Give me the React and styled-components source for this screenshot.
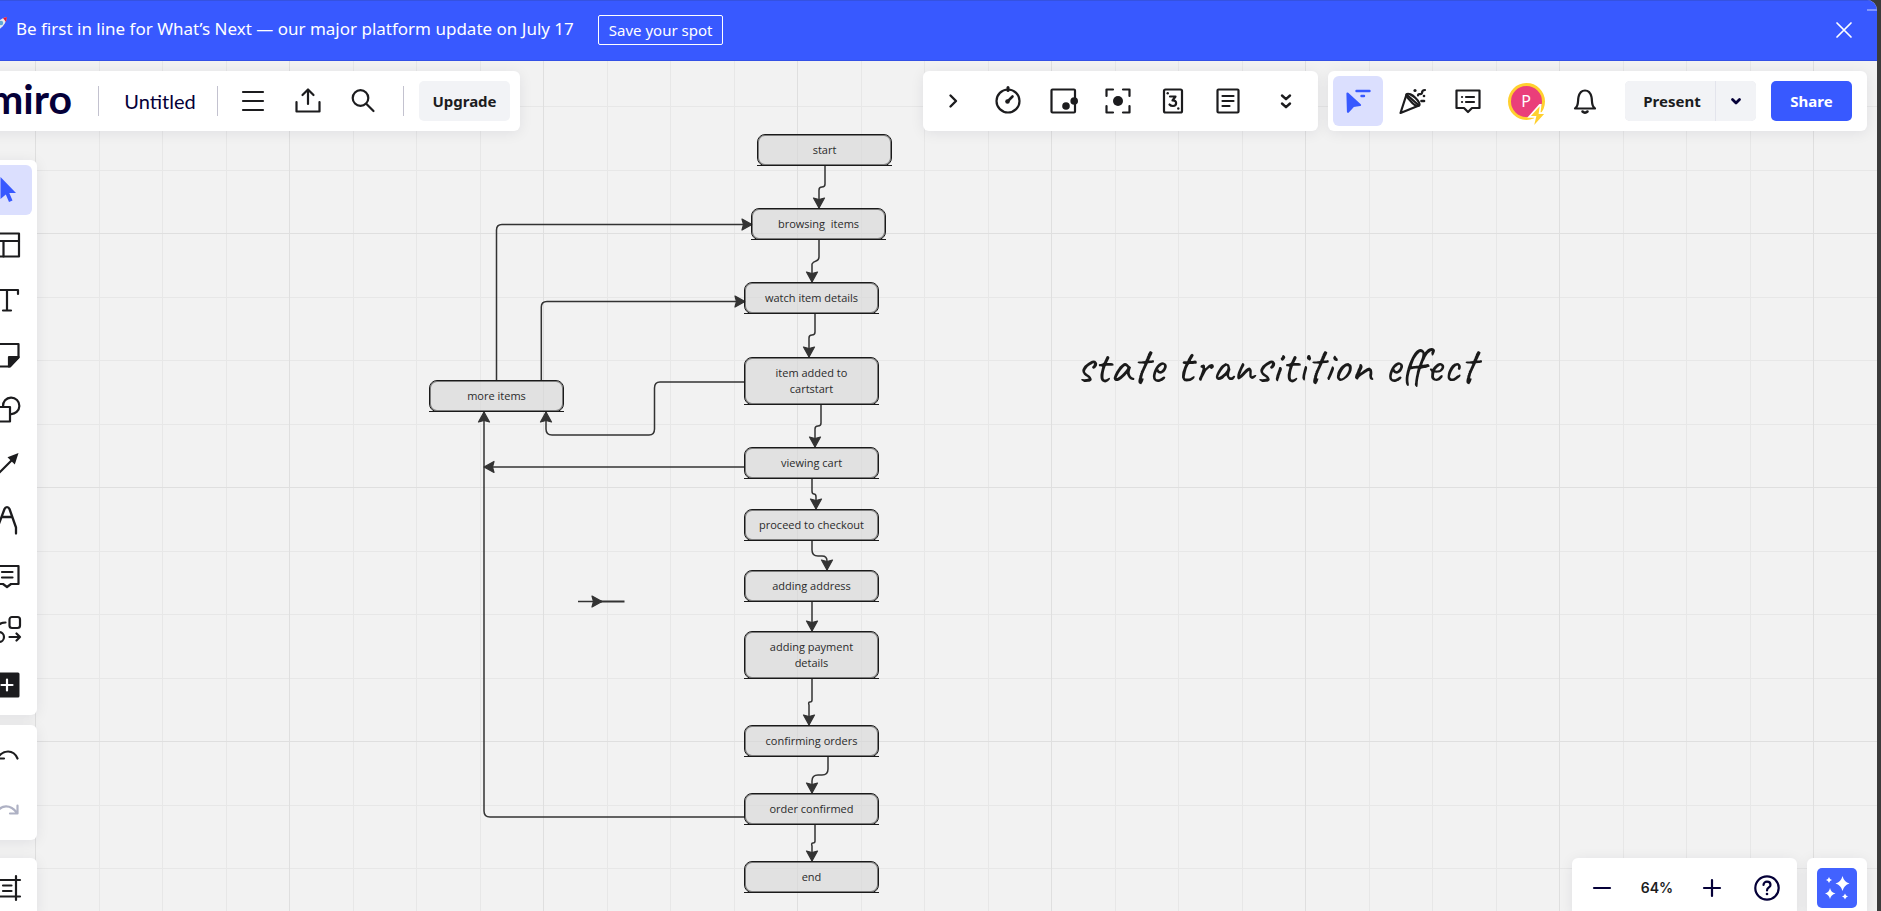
import React from "react";
import styled, { createGlobalStyle, css } from "styled-components";

const BANNER = 61;
const ink = "#1c1c1e";
const navy = "#050038";
const blue = "#3859ff";

const Global = createGlobalStyle`
  *, *::before, *::after { box-sizing: border-box; }
  html, body { margin: 0; height: 100%; overflow: hidden; }
  #root { height: 100%; }
  body { background: #3b3b3b; font-family: "Noto Sans", "Open Sans", sans-serif; color: ${ink}; }
  button { font: inherit; color: inherit; border: 0; padding: 0; background: none; cursor: pointer; }
`;

const Frame = styled.div`
  display: flex;
  flex-direction: column;
  height: 100vh;
  margin-right: 4px;
  overflow: hidden;
  border-top-right-radius: 10px;
  background: #f2f2f2;
`;

const Banner = styled.header`
  position: relative;
  z-index: 3;
  flex: none;
  display: flex;
  align-items: center;
  height: ${BANNER}px;
  padding: 0 20px 1px 0;
  background: ${blue};
  border-top: 1px solid #3552e0;
  border-bottom: 1px solid #3350e6;
  color: #fff;

  &::after {
    content: "";
    position: absolute;
    top: 8px;
    right: 0;
    width: 10px;
    height: 2px;
    background: #7f94ff;
  }
`;

const Rocket = styled.svg`
  width: 20px;
  height: 20px;
  margin: 0 8px 8px -12px;
`;

const BannerText = styled.p`
  margin: 0 24px 3px 0;
  font-size: 17px;
  line-height: 24px;
  white-space: nowrap;
`;

const BannerButton = styled.button`
  height: 30px;
  padding: 0 10px;
  border: 1px solid #fff;
  border-radius: 2px;
  font-size: 15px;
  line-height: 28px;
  white-space: nowrap;
`;

const CloseButton = styled.button`
  margin-left: auto;
  width: 26px;
  height: 26px;
  svg { display: block; }
`;

const Board = styled.main`
  position: relative;
  flex: 1;
  min-height: 0;
`;

const Scene = styled.section`
  position: absolute;
  inset: -${BANNER}px 0 0 0;
  overflow: hidden;
`;

const Drawing = styled.svg`
  position: absolute;
  inset: 0;
  width: 100%;
  height: 100%;
`;

const Node = styled.div`
  position: absolute;
  left: ${(p) => p.$x}px;
  top: ${(p) => p.$y}px;
  width: 135px;
  height: ${(p) => (p.$tall ? 48 : 32)}px;
  display: flex;
  align-items: center;
  justify-content: center;
  padding: 0 20px 1px;
  border: 1px solid #1a1a1a;
  border-radius: 8px;
  box-shadow: inset 0 0 0 1px rgba(26, 26, 26, 0.5);
  background: rgba(215, 215, 215, 0.65);
  color: #2b2b2b;
  font: 11px/16px "Open Sans", sans-serif;
  text-align: center;
  white-space: ${(p) => (p.$tall ? "normal" : "pre")};

  &::after {
    content: "";
    position: absolute;
    left: -1px;
    right: -1px;
    bottom: -1px;
    height: 1px;
    background: #1a1a1a;
  }
`;

const Caption = styled.h1`
  position: absolute;
  left: 1076px;
  top: 336px;
  margin: 0;
  color: #1a1a1a;
  font: 400 50px/60px Caveat, Lato, cursive;
  white-space: nowrap;
`;

const Panel = styled.div`
  display: flex;
  flex-direction: ${(p) => (p.$column ? "column" : "row")};
  align-items: center;
  gap: 5px;
  padding: 5px;
  border-radius: 6px;
  background: #fff;
  box-shadow: 0 2px 14px rgba(5, 0, 56, 0.08);
  ${(p) => !p.$column && css`height: 60px;`}
`;

const TopBar = styled.div`
  position: absolute;
  z-index: 2;
  top: 10px;
  left: -23px;
  right: 10px;
  display: flex;
  gap: 10px;
`;

const TitlePanel = styled(Panel)`
  margin-right: auto;
  padding: 0 10px 0 12px;
`;

const SideBar = styled.nav`
  position: absolute;
  z-index: 2;
  top: 99px;
  bottom: -7px;
  left: -23px;
  width: 60px;
  display: flex;
  flex-direction: column;
  gap: 10px;
`;

const Bottom = styled(Panel)`
  margin-top: auto;
`;

const CornerBar = styled.div`
  position: absolute;
  z-index: 2;
  right: 10px;
  bottom: -7px;
  display: flex;
  gap: 10px;
`;

const IconButton = styled.button`
  flex: none;
  display: grid;
  place-items: center;
  width: ${(p) => p.$w || 50}px;
  height: 50px;
  border-radius: 6px;
  background: ${(p) => (p.$active ? "#dbdffe" : "transparent")};
  color: ${(p) => p.$color || ink};
`;

const Logo = styled.a`
  width: 85px;
  color: ${navy};
  font: 700 41px/48px Lato, sans-serif;
  text-decoration: none;
  padding-bottom: 4px;
`;

const BoardName = styled.button`
  width: 104px;
  height: 50px;
  padding-left: 4px;
  color: ${navy};
  font: 400 20px/24px Lato, sans-serif;
`;

const Divider = styled.span`
  flex: none;
  width: 1px;
  height: 30px;
  margin: 0 ${(p) => p.$right || 0}px 0 ${(p) => p.$left || 0}px;
  background: #c3c2cf;
`;

const TextButton = styled.button`
  height: 40px;
  width: ${(p) => p.$w}px;
  border-radius: 5px;
  background: ${(p) => (p.$primary ? blue : "#f2f3f6")};
  color: ${(p) => (p.$primary ? "#fff" : ink)};
  font-size: 15px;
  font-weight: 700;
`;

const PresentButton = styled(TextButton)`
  padding-left: 4px;
  border-radius: 5px 0 0 5px;
`;

const Split = styled.div`
  display: flex;
  gap: 1px;
  margin: 0 10px 0 9px;
  border-radius: 5px;
  background: #e3e4ec;
`;

const DropButton = styled.button`
  display: grid;
  place-items: center;
  width: 40px;
  height: 40px;
  border-radius: 0 5px 5px 0;
  background: #f2f3f6;
  color: ${navy};
`;

const Avatar = styled.span`
  position: relative;
  display: grid;
  place-items: center;
  width: 37px;
  height: 37px;
  border: 3px solid #ffd02f;
  border-radius: 50%;
  background: #ea3e7a;
  color: #fff;
  font-size: 16px;
  line-height: 20px;

  svg { position: absolute; right: -6px; bottom: -9px; }
`;

const Zoom = styled.span`
  width: 50px;
  text-align: center;
  font: 600 14px/20px Inter, sans-serif;
`;

const AiButton = styled.button`
  width: 40px;
  height: 40px;
  margin: 5px;
  border-radius: 5px;
  background: #4262ff;
  svg { display: block; }
`;

const Icon = ({ children }) => (
  <svg width="30" height="30" viewBox="0 0 30 30" fill="none" stroke="currentColor" strokeWidth="2.200" strokeLinecap="round" strokeLinejoin="round" aria-hidden="true">
    {children}
  </svg>
);

const solid = { fill: "currentColor", stroke: "none" };

const icons = {
  menu: <path d="M5 6h20M5 15h20M5 24h20" />,
  share: <path d="M15 18V4M9.500 9L15 3.500 20.500 9M3.500 16v9.500h23V16" />,
  search: <><circle cx="12.500" cy="12" r="7.800" /><path d="M18.500 18l7 7" /></>,
  chevron: <path d="M12.500 9.500l5.500 5.500-5.500 5.500" strokeWidth="2.400" />,
  timer: <><circle cx="15" cy="15" r="11.500" /><path d="M15 1.500v3" strokeWidth="3" /><circle cx="14.500" cy="15.500" r="2.300" {...solid} /><path d="M15 15l4.500-4.500" strokeWidth="2.600" /></>,
  stickers: <><rect x="3.500" y="3.500" width="23.500" height="23" rx="1" /><circle cx="18" cy="20" r="3.800" {...solid} /><circle cx="26.200" cy="15" r="3.800" {...solid} /></>,
  focus: <><path d="M10 3.500H3.500V10M20 3.500h6.500V10M10 26.500H3.500V20M20 26.500h6.500V20" /><circle cx="15" cy="15" r="5" {...solid} /></>,
  card: <><rect x="6" y="3.500" width="18" height="23" rx="1.500" /><path d="M12 10.500h5.500l-3 4c5-.5 4.500 5.500.500 5.500-1.500 0-2.700-.5-3.500-1.500" /><circle cx="9.700" cy="7.300" r="1.200" {...solid} /><circle cx="20.300" cy="22.500" r="1.200" {...solid} /></>,
  note: <><rect x="4.500" y="3.500" width="21" height="23" rx="1" /><path d="M9.500 10h11M9.500 15h11M9.500 20h7" /></>,
  more: <path d="M11 9.500l4 3.700 4-3.700M11 17.500l4 3.700 4-3.700" strokeWidth="2.400" />,
  collab: <><path d="M4.500 7.500L17 19l-6.500.800-5.500 6z" fill="currentColor" /><path d="M13.500 5h13M18.500 10h2.500" strokeWidth="2.400" /></>,
  party: <><path d="M8.500 8.500L2.500 27l18.500-7.500z" /><path d="M8.500 8.500c1.500-2 6 .5 9 3.500s5 6.500 3.500 7.500c-2 1-5.500-1-8-4s-5.500-5-4.500-7z" /><path d="M20 9.500c0-3 3.500 0 4-2.500 0-2 1.500-3 3-3" /><path d="M23.500 15h2.500" strokeWidth="2.600" /><circle cx="17" cy="4.500" r="1.600" {...solid} /><circle cx="26" cy="10" r="1.300" {...solid} /></>,
  chat: <><path d="M3.500 4.500h23v17.500H19L15 26l-4-4H3.500z" /><path d="M9 11h.1M13 11h8M9 16h.1M13 16h8" /></>,
  bell: <><path d="M5 22.500c4-2.500 2.500-7 3.500-11.500C9.500 6.500 12 4.500 15 4.500s5.500 2 6.500 6.500c1 4.500-.5 9 3.500 11.500z" /><path d="M12.500 25.500c1.500 1.500 3.500 1.500 5 0" strokeWidth="2.500" /></>,
  down: <path d="M11.500 13.500l3.500 3.500 3.500-3.500" strokeWidth="2.800" />,
  pointer: <path d="M8.500 2v22l5.300-4.500L17 27l3.500-1.500-3.200-7.500H24z" {...solid} />,
  template: <><rect x="3" y="3.500" width="24" height="23" /><path d="M3 11h24M11.500 11v15.500" /></>,
  text: <path d="M4 9V5h22v4M15 5v20.500M11 25.500h8" />,
  sticky: <><path d="M4 4h22.500v13.500l-8.500 9H4z" /><path d="M17 26.500V17h9.500z" fill="currentColor" /></>,
  shapes: <><path d="M11 11.500a8.200 8.200 0 1 1 7.500 7.500" /><rect x="3" y="12" width="15" height="14.500" /></>,
  arrow: <><path d="M4 26L20 10" /><path d="M26.500 3l-3.700 11.500-7.300-7.300z" {...solid} /></>,
  pen: <path d="M5.500 28.500v-6L12.500 4c1-2.500 4-2.500 5 0l6.500 18.500v6M10 12h10" strokeWidth="2.300" />,
  comment: <><path d="M3.500 6h23v18H19l-4 3-4-3H3.500z" /><path d="M10 12h10.500M10 17.500h10.500" /></>,
  diagram: <><rect x="17.500" y="2" width="10.500" height="11" rx="2.500" /><circle cx="7" cy="22" r="5" /><path d="M5 13c1-4 4-5.500 8.500-5.500M17.500 22H28M24.500 18.500L28 22l-3.500 3.500" /></>,
  add: <><rect x="2.500" y="2.500" width="25" height="25" rx="1.500" {...solid} /><path d="M15 9.500v11M9.500 15h11" stroke="#fff" /></>,
  undo: <path d="M25.500 18.500c-4-9.500-14.500-9-20-.5M4.500 10.500v8H12" />,
  redo: <path d="M4.500 18.500c4-9.500 14.500-9 20-1M25.500 10.500v8H18" />,
  frames: <path d="M2 7h26M2 23.500h26M6 3v24M24 3v24M11 12.500h8.500M11 18h8.500" />,
  minus: <path d="M7 15h16" />,
  plus: <path d="M7 15h16M15 7v16" />,
  help: <><circle cx="15" cy="15" r="11.700" /><path d="M11.500 12c0-4.500 7-4.500 7 0 0 2.500-3.500 2.500-3.500 5.500" /><circle cx="15" cy="21" r="1.300" {...solid} /></>,
};

const Tool = ({ name, label, ...rest }) => (
  <IconButton type="button" aria-label={label} {...rest}>
    <Icon>{icons[name]}</Icon>
  </IconButton>
);

const nodes = [
  { text: "start", x: 757, y: 134 },
  { text: "browsing  items", x: 751, y: 208 },
  { text: "watch item details", x: 744, y: 282 },
  { text: "item added to cartstart", x: 744, y: 357, tall: true },
  { text: "more items", x: 429, y: 380 },
  { text: "viewing cart", x: 744, y: 447 },
  { text: "proceed to checkout", x: 744, y: 509 },
  { text: "adding address", x: 744, y: 570 },
  { text: "adding payment details", x: 744, y: 631, tall: true },
  { text: "confirming orders", x: 744, y: 725 },
  { text: "order confirmed", x: 744, y: 793 },
  { text: "end", x: 744, y: 861 },
];

const links = [
  "M825 166V184Q825 187 822 187T819 190V208",
  "M819 240V257Q819 260 816 261T812 264V282",
  "M815 314V332Q815 335 812 335T809 338V357",
  "M821 405V423Q821 426 818 426T815 429V447",
  "M812 479V491Q812 494 814 494T816 497V509",
  "M812 541V550Q812 556 818 556H822Q827 556 827 561V570",
  "M812 602V631",
  "M812 679V700Q812 702 810 702T809 705V725",
  "M828 757V769Q828 775 822 775H818Q812 775 812 781V793",
  "M815 825V841Q815 843 813 843T812 846V861",
  "M496.500 380V230Q496.500 224.500 502 224.500H752",
  "M541.300 380V307Q541.300 301.500 547 301.500H745",
  "M745 382H660Q654.500 382 654.500 388V429Q654.500 435 649 435H552Q546 435 546 429V412",
  "M745 467H484",
  "M745 817H490Q484 817 484 811V412",
  "M578 601.500H602",
];

const SideTools = [
  ["pointer", "Select"],
  ["template", "Templates"],
  ["text", "Text"],
  ["sticky", "Sticky note"],
  ["shapes", "Shapes"],
  ["arrow", "Connection line"],
  ["pen", "Pen"],
  ["comment", "Comment"],
  ["diagram", "Diagramming"],
  ["add", "More apps"],
];

const MidTools = [
  ["chevron", "Collapse tools"],
  ["timer", "Timer"],
  ["stickers", "Attachments"],
  ["focus", "Focus"],
  ["card", "Estimation"],
  ["note", "Notes"],
];

function Diagram() {
  return (
    <Scene>
      <Drawing aria-hidden="true">
        <defs>
          <pattern id="grid" x="35" y="233" width="254" height="254" patternUnits="userSpaceOnUse">
            <path d="M64.500 0V254M127.500 0V254M191.500 0V254M0 64.500H254M0 127.500H254M0 191.500H254" stroke="#e7e7e7" />
            <path d="M.5 0V254M0 .5H254" stroke="#dfdfdf" />
          </pattern>
          <marker id="tip" viewBox="-12 -7 14 14" refX="0" refY="0" markerWidth="14" markerHeight="14" markerUnits="userSpaceOnUse" orient="auto">
            <path d="M0 0L-10 5.500-8.500 0-10-5.500z" fill="#333" stroke="#333" strokeWidth="1.200" strokeLinejoin="round" />
          </marker>
        </defs>
        <rect width="100%" height="100%" fill="url(#grid)" />
        <g fill="none" stroke="#333" strokeWidth="1.500">
          {links.map((d) => (
            <path key={d} d={d} markerEnd="url(#tip)" />
          ))}
          <path d="M600 601.500H624.500" strokeWidth="2" />
        </g>
      </Drawing>
      {nodes.map((n) => (
        <Node key={n.text} $x={n.x} $y={n.y} $tall={n.tall}>{n.text}</Node>
      ))}
      <Caption>state transitition effect</Caption>
    </Scene>
  );
}

export default function App() {
  return (
    <>
      <Global />
      <Frame>
        <Banner>
          <Rocket viewBox="0 0 20 20" aria-hidden="true">
            <path d="M4 9l5-3 3 7-4 5-1-5-4-1z" fill="#d9163f" />
            <path d="M6 13C8 6 13 2 19 1c-1 6-4 11-11 14z" fill="#e8eaf0" />
            <path d="M15 2l4-1-1 5z" fill="#d9163f" />
            <circle cx="13" cy="7" r="2.200" fill="#5fa8d8" />
          </Rocket>
          <BannerText>Be first in line for What’s Next — our major platform update on July 17</BannerText>
          <BannerButton type="button">Save your spot</BannerButton>
          <CloseButton type="button" aria-label="Close">
            <svg width="26" height="26" viewBox="0 0 26 26" stroke="#fff" strokeWidth="1.700" strokeLinecap="round">
              <path d="M6 6l14 14M20 6L6 20" />
            </svg>
          </CloseButton>
        </Banner>
        <Board>
          <Diagram />
          <TopBar>
            <TitlePanel>
              <Logo href="#home">miro</Logo>
              <Divider $left={19} $right={2} />
              <BoardName type="button">Untitled</BoardName>
              <Divider $left={2} $right={5} />
              <Tool name="menu" label="Main menu" />
              <Tool name="share" label="Export" />
              <Tool name="search" label="Search" />
              <Divider $left={10} $right={10} />
              <TextButton type="button" $w={91}>Upgrade</TextButton>
            </TitlePanel>
            <Panel>
              {MidTools.map(([name, label]) => (
                <Tool key={name} name={name} label={label} />
              ))}
              <Tool name="more" label="More tools" $w={55} />
            </Panel>
            <Panel>
              <Tool name="collab" label="Show collaborators’ cursors" $active $color={blue} />
              <Tool name="party" label="Reactions" />
              <Tool name="chat" label="Activity" />
              <IconButton type="button" aria-label="Profile" $w={56}>
                <Avatar>
                  P
                  <svg width="21" height="22" viewBox="0 0 18 20">
                    <path d="M11 2L3 11h5l-2 8 9-10h-5z" fill="#ffd02f" stroke="#fff" strokeWidth="3" paintOrder="stroke" />
                  </svg>
                </Avatar>
              </IconButton>
              <Tool name="bell" label="Notifications" $w={52} />
              <Split>
                <PresentButton type="button" $w={90}>Present</PresentButton>
                <DropButton type="button" aria-label="Presentation options">
                  <Icon>{icons.down}</Icon>
                </DropButton>
              </Split>
              <TextButton type="button" $w={81} $primary>Share</TextButton>
              <span />
              <span />
            </Panel>
          </TopBar>
          <SideBar>
            <Panel $column>
              {SideTools.map(([name, label], i) => (
                <Tool key={name} name={name} label={label} $active={i === 0} $color={i === 0 ? blue : ink} />
              ))}
            </Panel>
            <Panel $column>
              <Tool name="undo" label="Undo" />
              <Tool name="redo" label="Redo" $color="#aeb1c4" />
            </Panel>
            <Bottom $column>
              <Tool name="frames" label="Frames" />
            </Bottom>
          </SideBar>
          <CornerBar>
            <Panel>
              <Tool name="minus" label="Zoom out" $color={navy} />
              <Zoom>64%</Zoom>
              <Tool name="plus" label="Zoom in" $color={navy} />
              <Tool name="help" label="Help" $color={navy} />
            </Panel>
            <Panel>
              <AiButton type="button" aria-label="Assistant">
                <svg width="40" height="40" viewBox="0 0 40 40" fill="#fff">
                  <path d="M25.500 8q1.500 6 7 7.500-5.500 1.500-7 7.500-1.500-6-7-7.500 5.500-1.500 7-7.500z" />
                  <path d="M13 20q1 4.500 5.500 5.500-4.500 1-5.500 5.500-1-4.500-5-5.500 4-1 5-5.500z" />
                  <path d="M12 9q.6 2.400 3 3-2.400.6-3 3-.6-2.400-3-3 2.400-.6 3-3z" />
                  <path d="M28 25.500q.6 2.400 3 3-2.400.6-3 3-.6-2.400-3-3 2.400-.6 3-3z" />
                </svg>
              </AiButton>
            </Panel>
          </CornerBar>
        </Board>
      </Frame>
    </>
  );
}
